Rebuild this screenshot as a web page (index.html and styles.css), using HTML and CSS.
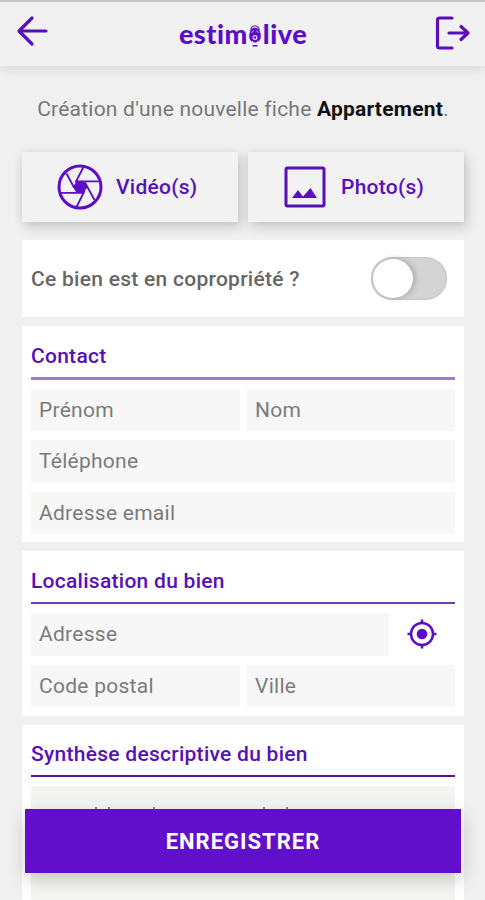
FILE: index.html
```html
<!DOCTYPE html>
<html lang="fr">
<head>
<meta charset="utf-8">
<title>Estimolive</title>
<link rel="stylesheet" href="styles.css">
</head>
<body>
<div class="app">
  <header class="topbar">
    <svg class="back" viewBox="0 0 34 34" aria-hidden="true"><path d="M30 17H4M16 4L3 17l13 13"/></svg>
    <div class="logo"><span class="estim">estim</span><svg class="pin" viewBox="0 0 14 26" aria-hidden="true"><path class="ring" d="M3 8c-1-7 9-7 8 0"/><path d="M7 4.500c3 0 5.800 4 5.800 8.500S10 19.500 7 19.500 1.200 17.500 1.200 13 4 4.500 7 4.500z"/><circle class="hole" cx="7" cy="14.500" r="2.500"/><circle cx="7" cy="14.500" r="1.300"/><path class="hole-line" d="M3.500 9.500l2-1.500M8.500 8l2 1.500M4 18l1.500 1.500M10 18l-1.500 1.500"/><path d="M4.500 22h5v1.500h-5z"/></svg><span class="live">live</span></div>
    <svg class="exit" viewBox="0 0 36 36" aria-hidden="true"><path d="M17 2H4.500Q2.500 2 2.500 4v26q0 2 2 2H17M14 17h19M26 10.500l7 6.500-7 6.500"/></svg>
  </header>
  <main class="content">
    <p class="intro">Création d'une nouvelle fiche <strong>Appartement</strong>.</p>
    <div class="media">
      <button class="media-button">
        <svg class="shutter" viewBox="0 0 46 46" aria-hidden="true"><circle class="rim" cx="23" cy="23" r="21"/><path class="core" d="M19.500 17.500h7.500l3.500 5.500-4 6h-7l-3.500-6z"/><path class="blades" d="M9.500 9.500L17 23.500M18.500 18.500L26.500 3M19 17.300h23M28 18.500L37.500 36M27.500 27L19.500 43M27 28.800H3.500"/></svg>
        <span>Vidéo(s)</span>
      </button>
      <button class="media-button photo">
        <svg class="picture" viewBox="0 0 42 42" aria-hidden="true"><rect x="2" y="2" width="38" height="38" rx="1.500"/><path d="M8 32l6-8 5 6.500L26.500 22 33 32z"/></svg>
        <span>Photo(s)</span>
      </button>
    </div>
    <section class="card copro">
      <span class="question">Ce bien est en copropriété ?</span>
      <span class="switch"><span class="knob"></span></span>
    </section>
    <section class="card contact">
      <h2>Contact</h2>
      <div class="fields">
        <div class="field">Prénom</div>
        <div class="field">Nom</div>
        <div class="field wide">Téléphone</div>
        <div class="field wide">Adresse email</div>
      </div>
    </section>
    <section class="card location">
      <h2>Localisation du bien</h2>
      <div class="fields">
        <div class="locate wide">
          <div class="field">Adresse</div>
          <svg class="target" viewBox="0 0 30 30" aria-hidden="true"><circle class="outline" cx="15" cy="15" r="11"/><circle cx="15" cy="15" r="5.300"/><path class="outline" d="M15 0.500v4M15 25.500v4M0.500 15h4M25.500 15h4"/></svg>
        </div>
        <div class="field">Code postal</div>
        <div class="field">Ville</div>
      </div>
    </section>
    <section class="card summary">
      <h2>Synthèse descriptive du bien</h2>
      <div class="fields"><div class="field wide tall"><svg class="marks" viewBox="0 0 424 24" aria-hidden="true"><path d="M64 21h2v3h-2zM77 21h2v3h-2zM122 21h2v3h-2zM232 21h2v3h-2zM255 21h2v3h-2z"/></svg></div></div>
    </section>
  </main>
  <button class="save">ENREGISTRER</button>
</div>
</body>
</html>
```
FILE: styles.css
```css
* { box-sizing: border-box; }
body { margin: 0; font-family: Roboto, sans-serif; background: #f0f0f0; color: #666; letter-spacing: .27px; }
.app { position: relative; height: 900px; overflow: hidden; }
svg { display: block; fill: #5b0dc8; flex: none; }
button { font: inherit; letter-spacing: inherit; border: 0; padding: 0; }

.topbar { height: 66px; border-top: 2px solid #c4c4c4; background: #f1f1f1; box-shadow: 0 3px 12px rgba(0,0,0,.1); display: flex; justify-content: space-between; align-items: flex-start; padding: 0 14px 0 16px; }
.back, .exit { fill: none; stroke: #5710b8; stroke-width: 3.2; stroke-linecap: round; stroke-linejoin: round; }
.back { width: 34px; height: 34px; margin-top: 12px; }
.exit { width: 36px; height: 36px; margin-top: 14px; }
.logo { display: flex; align-items: center; height: 62px; margin-left: 1px; font-family: Lato, sans-serif; font-weight: 900; font-size: 27px; letter-spacing: .5px; color: #5b0dc8; }
.pin { width: 14px; height: 26px; margin: 5px 1px 0 0; }
.ring { fill: none; stroke: #5b0dc8; stroke-width: 1.2; }
.hole { fill: #e8defa; }
.hole-line { stroke: #d9c9f2; }

.content { padding: 0 21px 0 22px; }
.intro { margin: 30px 0 0; height: 26px; line-height: 26px; text-align: center; white-space: nowrap; font-size: 21px; letter-spacing: .22px; color: #777; }
.intro strong { color: #111; font-weight: 700; }
.media { display: grid; grid-template-columns: 216px 216px; gap: 10px; margin-top: 30px; }
.media-button { height: 70px; background: #f2f2f2; box-shadow: 3px 5px 11px rgba(0,0,0,.17), -1px -1px 9px rgba(0,0,0,.06); display: flex; align-items: center; padding-left: 35px; color: #5710b8; font-weight: 500; font-size: 21px; }
.shutter { width: 46px; height: 46px; margin-right: 13px; }
.rim { fill: none; stroke: #5b0dc8; stroke-width: 3; }
.blades { fill: none; stroke: #5b0dc8; stroke-width: 1.8; }
.picture { width: 42px; height: 42px; margin: 0 15px 0 1px; }
.picture rect { fill: none; stroke: #5710b8; stroke-width: 3; }

.card { background: #fff; padding: 9px 9px 8px; margin-top: 9px; }
.copro { margin-top: 18px; height: 77px; display: flex; align-items: center; justify-content: space-between; padding-right: 17px; font-weight: 500; font-size: 21px; color: #666; }
.switch { width: 76px; height: 43px; margin-bottom: 1px; border-radius: 22px; background: #d4d4d4; padding: 2px; box-shadow: inset 0 0 2px #aaa; }
.knob { display: block; width: 40px; height: 39px; border-radius: 50%; background: #fff; box-shadow: 2px 0 6px rgba(0,0,0,.22); }
h2 { margin: 0 0 9px; height: 44px; line-height: 42px; border-bottom: 2px solid #7040a8; font-size: 21px; font-weight: 500; color: #5710b8; }
.contact h2 { height: 45px; border-bottom: 3px solid #a179c6; }
.summary h2 { height: 43px; line-height: 41px; border-bottom-color: #5b1499; }
.fields { display: grid; grid-template-columns: 209px 208px; column-gap: 7px; row-gap: 9px; }
.field { height: 42.300px; line-height: 42.500px; background: #f7f7f7; padding-left: 8px; font-size: 21px; color: #7b7b7b; }
.location { padding-bottom: 9px; }
.location .field { height: 42.800px; line-height: 43.500px; }
.wide { grid-column: 1 / -1; }
.locate { display: flex; align-items: center; }
.locate .field { width: 358px; }
.target { width: 30px; height: 30px; margin-left: 18px; }
.outline { fill: none; stroke: #5b0dc8; stroke-width: 2.5; }
.tall { height: 130px; padding: 0; background: #f4f4f3; }
.marks { width: 424px; height: 24px; fill: #8a8a8a; }

.save { position: absolute; left: 25px; top: 809px; width: 436px; height: 64px; background: #610fca; color: #fff; font-size: 22px; font-weight: 700; letter-spacing: 1px; box-shadow: 1px 6px 18px rgba(0,0,0,.2); }
```
